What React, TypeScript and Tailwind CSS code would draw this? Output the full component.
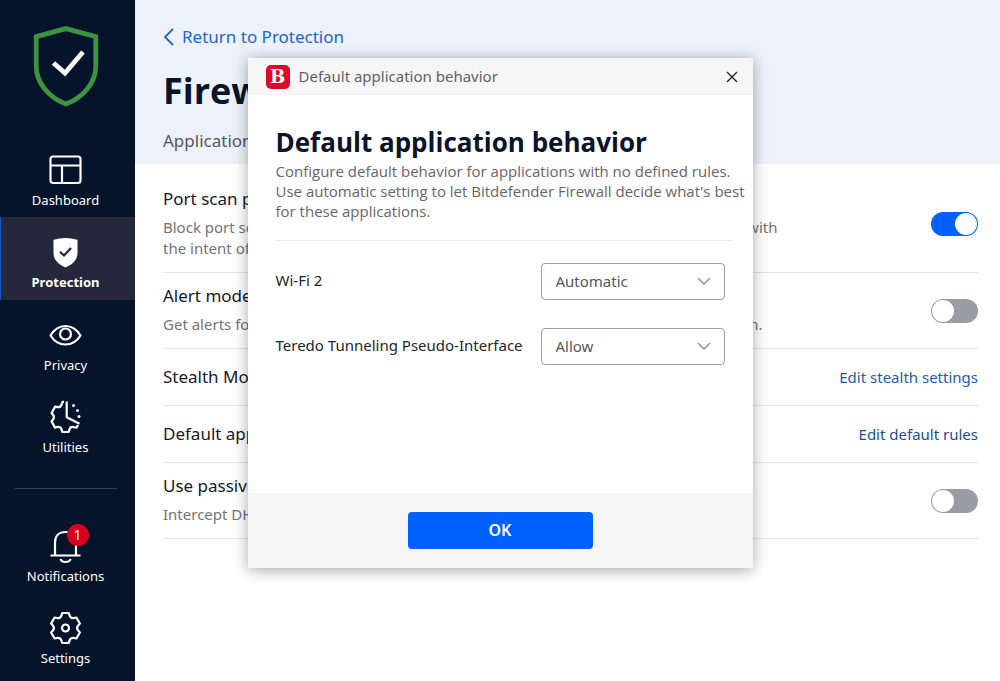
import { useState, type ReactNode } from "react";

function StatusShield() {
  return (
    <svg viewBox="0 0 66 82" className="h-[82px] w-[66px]" fill="none" aria-hidden="true">
      <path
        d="M33 2.6 L62.8 10.6 V40 C62.8 57 50 71.5 33 78 C16 71.5 3.2 57 3.2 40 V10.6 Z"
        stroke="#3d9440"
        strokeWidth="4.8"
      />
      <path d="M20.5 37 L32 47 L50 26" stroke="#fff" strokeWidth="4.8" />
    </svg>
  );
}

function DashboardIcon() {
  return (
    <svg viewBox="1 0 36 36" className="size-9" fill="none" stroke="#fff" strokeWidth="2.2" aria-hidden="true">
      <rect x="3.5" y="4.5" width="30" height="26.5" rx="2.5" />
      <path d="M3.5 13.5H33.5M15 13.5V31" />
    </svg>
  );
}

function ProtectionIcon() {
  return (
    <svg viewBox="1 0 36 36" className="size-9" fill="none" aria-hidden="true">
      <path d="M6.5 5.8 Q18.5 2.2 30.5 5.8 V19 C30.5 26 25.5 30.5 18.5 33.5 C11.5 30.5 6.5 26 6.5 19 Z" fill="#fff" />
      <path d="M13 17.8 L17 21.5 L24 14" stroke="#24283a" strokeWidth="2.2" />
    </svg>
  );
}

function PrivacyIcon() {
  return (
    <svg viewBox="1 0 36 36" className="size-9" fill="none" stroke="#fff" strokeWidth="2.2" aria-hidden="true">
      <path d="M3.5 18.5 C7.5 12 12.5 9 18.5 9 S29.5 12 33.5 18.5 C29.5 25 24.5 27.5 18.5 27.5 S7.5 25 3.5 18.5 Z" strokeLinejoin="round" />
      <circle cx="18.5" cy="17" r="5.5" />
    </svg>
  );
}

function UtilitiesIcon() {
  return (
    <svg viewBox="1 0 36 36" className="size-9" fill="none" stroke="#fff" strokeWidth="2.2" strokeLinejoin="round" aria-hidden="true">
      <path d="M17 2.8 H15.5 L14.6 5.6 C13.8 8 12 8.7 9.3 7.9 L8.2 7.6 L4.6 14 L6 15.8 C7.3 17.3 7.3 19 6 20.5 L4.6 22.4 L8 28.6 L10.2 28 C12.5 27.5 14 28.5 14.6 30.6 L15.3 33 H21.7 L22.4 30.6 C23 28.5 24.5 27.6 26.8 28.1 L29.5 28.6 L31 26.2" />
      <path d="M19.7 2.5 V18.3 L32.5 24.8" />
      <g fill="#fff" stroke="none">
        <circle cx="26.5" cy="6.5" r="1.5" />
        <circle cx="30.5" cy="11.5" r="1.5" />
        <circle cx="32" cy="17.5" r="1.5" />
      </g>
    </svg>
  );
}

function BellIcon() {
  return (
    <svg viewBox="1 0 36 36" className="size-9" fill="none" stroke="#fff" strokeWidth="2.2" aria-hidden="true">
      <path d="M3.5 27.5 H33.5 M8 27.5 V14.5 C8 8 12 4 18.5 4 S29 8 29 14.5 V27.5" />
      <path d="M13.5 31 C14.5 35 22.5 35 23.5 31" />
    </svg>
  );
}

function SettingsIcon() {
  return (
    <svg viewBox="1 0 36 36" className="size-9" fill="none" stroke="#fff" strokeWidth="2.2" strokeLinejoin="round" aria-hidden="true">
      <path d="M15.2 3 H21.8 L22.5 5.3 C23.2 7.5 25 8.5 27.2 8 L29.4 7.5 L32.9 13.6 L31.2 15.4 C29.8 17 29.8 19 31.2 20.6 L32.9 22.4 L29.4 28.5 L27.2 28 C25 27.5 23.2 28.5 22.5 30.7 L21.8 33 H15.2 L14.5 30.7 C13.8 28.5 12 27.5 9.8 28 L7.6 28.5 L4.1 22.4 L5.8 20.6 C7.2 19 7.2 17 5.8 15.4 L4.1 13.6 L7.6 7.5 L9.8 8 C12 8.5 13.8 7.5 14.5 5.3 Z" />
      <circle cx="18.5" cy="18" r="3.5" />
    </svg>
  );
}

function NavItem({ label, icon, active = false, badge }: { label: string; icon: ReactNode; active?: boolean; badge?: string }) {
  return (
    <a
      href="#"
      aria-current={active ? "page" : undefined}
      className={
        active
          ? "flex h-[83px] flex-col items-center border-l border-[#1c56c0] bg-[#24283a] pt-[17px] pr-[5px] text-[13px] leading-5 font-bold text-white"
          : "flex h-[82px] flex-col items-center pt-[17px] pr-1 text-[13px] leading-5 text-white"
      }
    >
      <span className="relative">
        {icon}
        {badge && (
          <span className="absolute -top-1 -right-[5px] flex size-[22px] items-center justify-center rounded-full bg-[#d9021c] text-sm leading-5 text-white">
            {badge}
          </span>
        )}
      </span>
      <span className="mt-[2px]">{label}</span>
    </a>
  );
}

function Toggle({ label, initial }: { label: string; initial: boolean }) {
  const [on, setOn] = useState(initial);
  return (
    <label className="relative h-6 w-[47px] shrink-0 cursor-pointer">
      <input
        type="checkbox"
        role="switch"
        aria-label={label}
        checked={on}
        onChange={(e) => setOn(e.target.checked)}
        className="peer block h-6 w-[47px] appearance-none rounded-full bg-[#9b9ca1] checked:bg-[#0061fe]"
      />
      <span className="pointer-events-none absolute top-px left-px size-[22px] rounded-full bg-white peer-checked:left-6" />
    </label>
  );
}

function SettingRow({ title, lines, children }: { title: string; lines?: string[]; children: ReactNode }) {
  return (
    <div className="flex items-center justify-between border-b border-[#e6e6e8]">
      <div className={lines ? "min-w-0 pt-[7px] pb-[13px]" : "min-w-0 py-3"}>
        <h2 className="text-[17px] leading-8 whitespace-nowrap text-[#161a26]">{title}</h2>
        {lines && (
          <div className="mt-[2px] text-[15px] leading-[21px] whitespace-nowrap text-[#737477]">
            {lines.map((line) => (
              <p key={line}>{line}</p>
            ))}
          </div>
        )}
      </div>
      {children}
    </div>
  );
}

function SelectRow({ id, label, value }: { id: string; label: string; value: string }) {
  return (
    <div className="flex items-center justify-between pr-2">
      <label htmlFor={id} className="pb-1 text-[15px] leading-6 text-[#22252d]">
        {label}
      </label>
      <span className="relative">
        <select
          id={id}
          defaultValue={value}
          className="block h-[37px] w-[184px] appearance-none rounded-[4px] border border-[#9d9ea2] bg-white px-[14px] text-[15px] text-[#55575e]"
        >
          <option>Automatic</option>
          <option>Allow</option>
          <option>Deny</option>
        </select>
        <svg viewBox="0 0 14 8" className="pointer-events-none absolute top-[14px] right-[14px] h-2 w-[14px]" fill="none" stroke="#8c8d92" strokeWidth="1.4" aria-hidden="true">
          <path d="M1 1 L7 7 L13 1" />
        </svg>
      </span>
    </div>
  );
}

function BehaviorDialog() {
  return (
    <div className="absolute inset-x-0 top-0 flex justify-center pt-[58px]">
      <section
        role="dialog"
        aria-labelledby="dialog-title"
        className="w-[505px] bg-white shadow-[0_2px_14px_rgba(0,0,0,0.35)]"
      >
        <header className="flex h-[37px] items-center bg-[#f6f6f7] pr-3 pl-[18px]">
          <span className="flex size-6 items-center justify-center rounded-[5px] bg-[#dc0a28] font-['DejaVu_Serif',serif] text-[18px] leading-6 font-bold text-white">
            B
          </span>
          <span className="ml-[9px] pb-0.5 text-[15px] leading-6 text-[#5f6066]">Default application behavior</span>
          <button type="button" aria-label="Close" className="ml-auto flex size-[18px] items-center justify-center">
            <svg viewBox="0 0 12 12" className="size-3" stroke="#1d1f24" strokeWidth="1.3" aria-hidden="true">
              <path d="M1 1 L11 11 M11 1 L1 11" />
            </svg>
          </button>
        </header>
        <div className="px-7 pt-7 pr-5 pb-32">
          <h2 id="dialog-title" className="font-['Open_Sans',sans-serif] text-[26px] leading-[38px] font-bold text-[#0a1428]">
            Default application behavior
          </h2>
          <p className="font-['Open_Sans',sans-serif] text-[15px] leading-5 whitespace-nowrap text-[#65666b]">
            Configure default behavior for applications with no defined rules.
            <br />
            Use automatic setting to let Bitdefender Firewall decide what's best
            <br />
            for these applications.
          </p>
          <hr className="mt-[19px] border-[#e9e9ea]" />
          <div className="mt-[22px] flex flex-col gap-7">
            <SelectRow id="wifi" label="Wi-Fi 2" value="Automatic" />
            <SelectRow id="teredo" label="Teredo Tunneling Pseudo-Interface" value="Allow" />
          </div>
        </div>
        <footer className="flex justify-center bg-[#f6f6f7] py-[19px]">
          <button type="button" className="h-[37px] w-[185px] rounded-[4px] bg-[#0061fe] pb-0.5 text-[16px] font-semibold text-white">
            OK
          </button>
        </footer>
      </section>
    </div>
  );
}

export default function App() {
  return (
    <div className="relative flex min-h-screen overflow-hidden bg-white font-['Noto_Sans','Open_Sans',sans-serif]">
      <nav aria-label="Main" className="w-[135px] shrink-0 bg-[#05142b]">
        <div className="flex h-[135px] justify-center pt-[26px] pr-1">
          <StatusShield />
        </div>
        <NavItem label="Dashboard" icon={<DashboardIcon />} />
        <NavItem label="Protection" icon={<ProtectionIcon />} active />
        <NavItem label="Privacy" icon={<PrivacyIcon />} />
        <NavItem label="Utilities" icon={<UtilitiesIcon />} />
        <hr className="mt-6 mr-[18px] mb-[22px] ml-[15px] border-[#33425a]" />
        <NavItem label="Notifications" icon={<BellIcon />} badge="1" />
        <NavItem label="Settings" icon={<SettingsIcon />} />
      </nav>
      <main className="min-w-0 flex-1">
        <header className="h-[164px] bg-[#edf1fa] pt-6 pl-7">
          <a href="#" className="flex items-center gap-2 text-[17px] leading-[26px] text-[#1d66cb]">
            <svg viewBox="0 0 11 18" className="h-[18px] w-[11px]" fill="none" stroke="#1d66cb" strokeWidth="1.8" aria-hidden="true">
              <path d="M10 1 L2 9 L10 17" />
            </svg>
            Return to Protection
          </a>
          <h1 className="mt-4 font-['Open_Sans',sans-serif] text-[36px] leading-[50px] font-bold text-[#0a1428]">Firewall</h1>
          <p className="mt-[13px] text-[17px] leading-6 text-[#55575e]">Application access</p>
        </header>
        <div className="pt-3 pr-[22px] pl-7">
          <SettingRow
            title="Port scan protection"
            lines={["Block port scans that detect which ports are open on your device, chiefly scans run with", "the intent of hacking it."]}
          >
            <Toggle label="Port scan protection" initial />
          </SettingRow>
          <SettingRow title="Alert mode" lines={["Get alerts for any application that tries to open any other kind of internet connection."]}>
            <Toggle label="Alert mode" initial={false} />
          </SettingRow>
          <SettingRow title="Stealth Mode">
            <a href="#" className="text-[15px] leading-6 text-[#1a5cb0]">Edit stealth settings</a>
          </SettingRow>
          <SettingRow title="Default application behavior">
            <a href="#" className="text-[15px] leading-6 text-[#1a4f96]">Edit default rules</a>
          </SettingRow>
          <SettingRow title="Use passive mode" lines={["Intercept DHCP traffic on this device."]}>
            <Toggle label="Use passive mode" initial={false} />
          </SettingRow>
        </div>
      </main>
      <BehaviorDialog />
    </div>
  );
}
